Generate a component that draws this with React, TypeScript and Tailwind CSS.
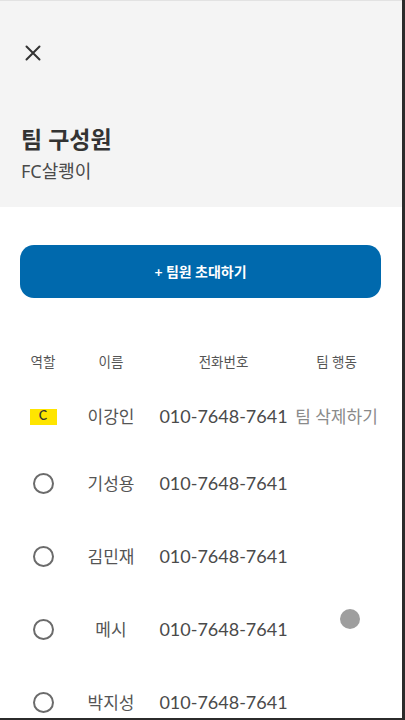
const members = [
  { name: "기성용", phone: "010-7648-7641" },
  { name: "김민재", phone: "010-7648-7641" },
  { name: "메시", phone: "010-7648-7641" },
  { name: "박지성", phone: "010-7648-7641" },
];

function Radio() {
  return <div className="w-[21px] h-[21px] rounded-full border-2 border-[#6b6b6b]" />;
}

export default function App() {
  return (
    <div
      className="relative w-[405px] h-[720px] overflow-hidden bg-white border-r-[3px] border-b-[2px] border-[#2b2b2b]"
      style={{ fontFamily: "Lato, 'Noto Sans CJK KR', sans-serif" }}
    >
      {/* header */}
      <div
        className="h-[207px] bg-[#f4f4f4] border-t border-[#e2e2e2] pl-[21px] pt-[44px]"
        style={{ fontFamily: "'Noto Sans', 'Noto Sans CJK KR', sans-serif" }}
      >
        <svg width="16" height="16" viewBox="0 0 16 16" className="ml-[4px]">
          <path d="M1.5 1.5 L14.5 14.5 M14.5 1.5 L1.5 14.5" stroke="#333" strokeWidth="2" strokeLinecap="round" />
        </svg>
        <div className="mt-[63px] text-[23px] leading-[30px] font-bold text-[#333]">팀 구성원</div>
        <div className="mt-[5px] text-[18px] leading-[24px] text-[#4a4a4a]">FC살쾡이</div>
      </div>

      {/* invite button */}
      <button className="mt-[38px] ml-[20px] w-[361px] h-[53px] rounded-[14px] bg-[#0069ad] text-white text-[14px] font-bold flex items-center justify-center">
        + 팀원 초대하기
      </button>

      {/* table header */}
      <div className="mt-[54px] h-[20px] flex items-center text-[13.5px] text-[#555]">
        <div className="w-[86px] shrink-0 flex justify-center">역할</div>
        <div className="w-[50px] shrink-0 flex justify-center">이름</div>
        <div className="ml-[24px] w-[127px] shrink-0 flex justify-center">전화번호</div>
        <div className="ml-[9px] w-[81px] shrink-0 flex justify-center whitespace-nowrap">팀 행동</div>
      </div>

      {/* captain row */}
      <div className="mt-[14px] h-[61px] flex items-center text-[17px]">
        <div className="w-[86px] shrink-0 flex justify-center">
          <div className="w-[27px] h-[16px] bg-[#ffe500] flex items-center justify-center text-[12.5px] font-semibold text-[#333]">
            C
          </div>
        </div>
        <div className="w-[50px] shrink-0 flex justify-center whitespace-nowrap text-[#555]">이강인</div>
        <div className="ml-[24px] w-[127px] shrink-0 flex justify-center whitespace-nowrap text-[18px] text-[#4a4a4a]">010-7648-7641</div>
        <div className="ml-[9px] w-[81px] shrink-0 flex justify-center whitespace-nowrap text-[#8a8a8a]">팀 삭제하기</div>
      </div>

      {members.map((m) => (
        <div key={m.name} className="h-[73px] flex items-center text-[17px]">
          <div className="w-[86px] shrink-0 flex justify-center">
            <Radio />
          </div>
          <div className="w-[50px] shrink-0 flex justify-center whitespace-nowrap text-[#555]">{m.name}</div>
          <div className="ml-[24px] w-[127px] shrink-0 flex justify-center whitespace-nowrap text-[18px] text-[#4a4a4a]">{m.phone}</div>
        </div>
      ))}

      {/* touch indicator */}
      <div className="absolute left-[340px] top-[609px] w-[20px] h-[20px] rounded-full bg-[#9e9e9e]" />
    </div>
  );
}
